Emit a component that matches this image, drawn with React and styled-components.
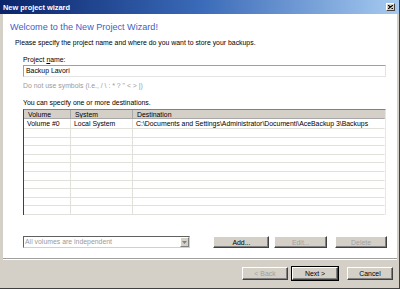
import React from "react";
import styled, { createGlobalStyle } from "styled-components";

const Global = createGlobalStyle`
  html, body { margin: 0; padding: 0; background: #d4d0c8; }
  body { font-family: "Liberation Sans", Arial, sans-serif; font-size: 7px; color: #000; }
`;

const Window = styled.div`
  width: 400px;
  height: 289px;
  box-sizing: border-box;
  display: flex;
  flex-direction: column;
  background: #d4d0c8;
  border-right: 1px solid #404040;
  border-bottom: 1px solid #404040;
  overflow: hidden;
`;

const TitleBar = styled.div`
  height: 14px;
  flex-shrink: 0;
  display: flex;
  align-items: center;
  justify-content: space-between;
  padding: 0 3px;
  background: linear-gradient(to right, #0a246a 0%, #3a6ab8 50%, #a6caf0 100%);
  color: #fff;
  font-weight: bold;
  font-size: 7.4px;
`;

const CloseBtn = styled.div`
  width: 9px;
  height: 8px;
  background: #d4d0c8;
  border: 1px solid;
  border-color: #fff #404040 #404040 #fff;
  box-sizing: border-box;
  display: flex;
  align-items: center;
  justify-content: center;
  margin-right: 1px;
`;

const Body = styled.div`
  flex: 1;
  display: flex;
  flex-direction: column;
  margin: 0 2px 0 3px;
`;

const Content = styled.div`
  background: #fff;
  height: 244px;
  box-sizing: border-box;
  padding: 6px 11px 0 7px;
  display: flex;
  flex-direction: column;
`;

const Heading = styled.div`
  color: #3b5fc6;
  font-size: 9.1px;
  line-height: 12px;
  margin-top: 1px;
`;

const Intro = styled.div`
  font-size: 6.9px;
  line-height: 9px;
  margin: 5px 0 0 5px;
`;

const Section = styled.div`
  display: flex;
  flex-direction: column;
  margin-left: 13px;
`;

const Label = styled.div`
  font-size: 6.9px;
  line-height: 9px;
  margin-top: ${(p) => p.$top}px;
  color: ${(p) => (p.$muted ? "#9a9a9a" : "#000")};
`;

const Input = styled.div`
  height: 12px;
  box-sizing: border-box;
  margin-top: 1px;
  border: 1px solid;
  border-color: #a0a0a0 #e4e4e4 #e4e4e4 #a0a0a0;
  padding: 0 2px;
  font-size: 6.9px;
  line-height: 10px;
`;

const Table = styled.div`
  margin-top: 2px;
  border-left: 1px solid #404040;
  border-top: 1px solid #808080;
  border-right: 1px solid #e8e8e8;
  display: grid;
  grid-template-columns: 47px 62px 1fr;
  grid-template-rows: 9px 10px repeat(10, 8.6px);
`;

const HeadCell = styled.div`
  background: #d4d0c8;
  border-right: 1px solid ${(p) => (p.$last ? "#d4d0c8" : "#a8a8a8")};
  border-bottom: 1px solid #a8a8a8;
  padding-left: 4px;
  font-size: 6.9px;
  line-height: 9px;
  overflow: hidden;
  white-space: nowrap;
`;

const Cell = styled.div`
  border-right: 1px solid ${(p) => (p.$last ? "transparent" : "#e2e0da")};
  border-bottom: 1px solid #e2e0da;
  padding: 1px 0 0 3px;
  font-size: 6.9px;
  line-height: 8px;
  overflow: hidden;
  white-space: nowrap;
  box-sizing: border-box;
`;

const Spacer = styled.div`
  flex: 1;
`;

const ActionRow = styled.div`
  display: flex;
  align-items: center;
  margin: 0 -1px 10px 13px;
`;

const Select = styled.div`
  width: 168px;
  height: 12px;
  box-sizing: border-box;
  border: 1px solid;
  border-color: #606060 #d4d0c8 #d4d0c8 #606060;
  display: flex;
  align-items: stretch;
  color: #9a9a9a;
  font-size: 6.9px;
  line-height: 10px;
`;

const SelectText = styled.div`
  flex: 1;
  padding-left: 1px;
`;

const SelectArrow = styled.div`
  width: 9px;
  background: #d4d0c8;
  border: 1px solid;
  border-color: #fff #808080 #808080 #fff;
  box-sizing: border-box;
  display: flex;
  align-items: center;
  justify-content: center;
`;

const Button = styled.div`
  width: ${(p) => p.$w}px;
  height: ${(p) => p.$h || 13}px;
  box-sizing: border-box;
  margin-left: ${(p) => p.$ml}px;
  background: #d4d0c8;
  border: 1px solid;
  border-color: #fff #404040 #404040 #fff;
  box-shadow: inset -1px -1px 0 #808080 ${(p) => (p.$def ? ", 0 0 0 1px #000" : "")};
  display: flex;
  align-items: center;
  justify-content: center;
  font-size: 6.9px;
  color: ${(p) => (p.$disabled ? "#a0a0a0" : "#000")};
`;

const Footer = styled.div`
  flex: 1;
  border-top: 1px solid #fff;
  box-shadow: 0 -1px 0 #a0a0a0;
  margin-top: 1px;
  display: flex;
  align-items: flex-start;
  padding: 7px 0 0 239px;
`;

const rows = Array.from({ length: 11 });

export default function App() {
  return (
    <>
      <Global />
      <Window>
        <TitleBar>
          <span>New project wizard</span>
          <CloseBtn>
            <svg width="5" height="4" viewBox="0 0 5 4">
              <path d="M0 0 L5 4 M5 0 L0 4" stroke="#000" strokeWidth="1.1" />
            </svg>
          </CloseBtn>
        </TitleBar>
        <Body>
          <Content>
            <Heading>Welcome to the New Project Wizard!</Heading>
            <Intro>Please specify the project name and where do you want to store your backups.</Intro>
            <Section>
              <Label $top={8}>
                Project <u>n</u>ame:
              </Label>
              <Input>Backup Lavori</Input>
              <Label $top={4} $muted>
                Do not use symbols (i.e., / \ : * ? " &lt; &gt; |)
              </Label>
              <Label $top={8}>You can specify one or more destinations.</Label>
              <Table>
                <HeadCell>Volume</HeadCell>
                <HeadCell>System</HeadCell>
                <HeadCell $last>Destination</HeadCell>
                {rows.map((_, i) => (
                  <React.Fragment key={i}>
                    <Cell>{i === 0 ? "Volume #0" : ""}</Cell>
                    <Cell>{i === 0 ? "Local System" : ""}</Cell>
                    <Cell $last>
                      {i === 0 ? "C:\\Documents and Settings\\Administrator\\Documenti\\AceBackup 3\\Backups" : ""}
                    </Cell>
                  </React.Fragment>
                ))}
              </Table>
            </Section>
            <Spacer />
            <ActionRow>
              <Select>
                <SelectText>All volumes are independent</SelectText>
                <SelectArrow>
                  <svg width="5" height="3" viewBox="0 0 5 3">
                    <path d="M0 0 H5 L2.5 3 Z" fill="#808080" />
                  </svg>
                </SelectArrow>
              </Select>
              <Button $w={56} $h={12} $ml={23}>Add...</Button>
              <Button $w={53} $h={12} $ml={5} $disabled>Edit...</Button>
              <Button $w={52} $h={12} $ml={8} $disabled>Delete</Button>
            </ActionRow>
          </Content>
          <Footer>
            <Button $w={46} $ml={0} $disabled>&lt; Back</Button>
            <Button $w={46} $ml={4} $def>Next &gt;</Button>
            <Button $w={46} $ml={9}>Cancel</Button>
          </Footer>
        </Body>
      </Window>
    </>
  );
}
